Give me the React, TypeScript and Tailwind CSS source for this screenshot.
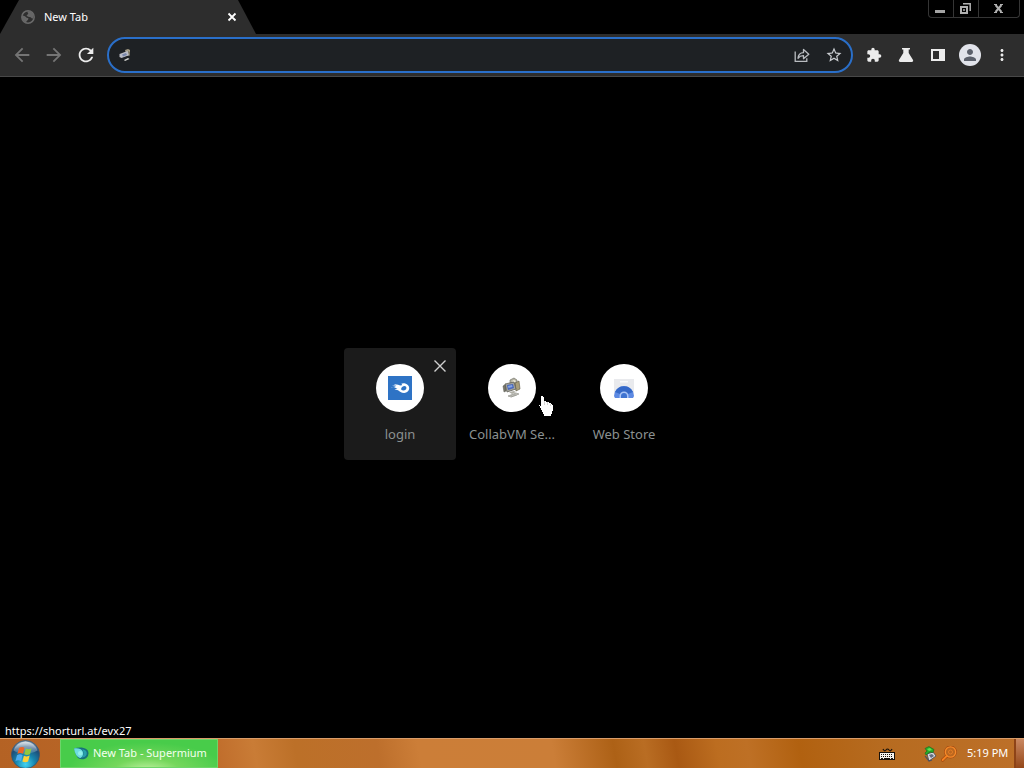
import type { ReactNode } from "react";
import {
  MdArrowBack,
  MdArrowForward,
  MdExtension,
  MdMoreVert,
  MdPerson,
  MdRefresh,
  MdStarBorder,
} from "react-icons/md";

function GlobeIcon() {
  return (
    <svg viewBox="0 0 16 16" className="size-4 shrink-0" aria-hidden="true">
      <circle cx="8" cy="8" r="6.2" fill="#2e2e2e" stroke="#6a6a6a" strokeWidth="1.5" />
      <path d="M2.2 6.2 5 7.2l1.7 1.6 1.8.4-.5 1.6-1.6 1.6-.3 1.5C3.500 13 2 10.800 1.800 8.500Z" fill="#666" />
      <path d="M7 2.200h3.200L13.600 5v3.600l-1.400 1.200-1.500-1.500-2.700-.5-1.500-1.200L8.300 4.700Z" fill="#666" />
    </svg>
  );
}

function MonitorsIcon() {
  return (
    <svg viewBox="0 0 24 24" className="size-6" aria-hidden="true">
      <path d="m10 4 4-2 3 2v5l-4 2-3-2Z" fill="#b5b3a3" stroke="#65645a" strokeWidth=".6" />
      <path d="m12 5 2-1 2 1-2 2Z" fill="#eeebd9" />
      <path d="m15 7 4-2 1 8-4 2Z" fill="#a99e79" stroke="#5b5542" strokeWidth=".6" />
      <path d="m3 10 3-2v7l-2 1Z" fill="#77766b" stroke="#55554d" strokeWidth=".5" />
      <path d="m5 8 9-2 2 7-9 3Z" fill="#a3a39b" stroke="#58584f" strokeWidth=".7" />
      <path d="m7 9 6-1 1 4-6 2Z" fill="#4968bd" />
      <path d="m8 10 4-1 .5 2-4 1Z" fill="#86a5e5" />
      <path d="m9 16 5-1 2 1-4 2Z" fill="#b1b0a7" />
      <path d="m8 20 8-3 3 1-8 3Z" fill="#d8d8d2" stroke="#85857c" strokeWidth=".6" />
      <path d="m10 20 6-2m-5 3 6-2" stroke="#8d8d85" strokeWidth=".5" />
    </svg>
  );
}

function TabMonitorsIcon() {
  return (
    <svg viewBox="0 0 16 16" className="size-4 shrink-0" aria-hidden="true">
      <path d="m8 3 3-1 2 1v5l-3 1Z" fill="#a39b83" />
      <path d="m2.500 7 8-3 2 4-8 3-2-1Z" fill="#b9bbc3" />
      <path d="m5 7.500 4-1.500 1 2-4 1.500Z" fill="#7886aa" />
      <path d="m7 13 4-2 1.500 1L8 14Z" fill="#d4d4cf" />
      <path d="m11 4 2 1v3l-1 1Z" fill="#77715e" />
    </svg>
  );
}

function ShareIcon() {
  return (
    <svg viewBox="0 0 16 16" className="size-4" fill="none" stroke="#b9bcc0" strokeWidth="1.300" aria-hidden="true">
      <path d="M1.200 4.500v9.800h11.600v-3" />
      <path d="M4 11.300c.3-3.700 2.100-5.600 5.500-5.700V2.500l5.300 4.700-5.300 4.500V8.700C7.100 8.600 5.400 9.400 4 11.300Z" strokeLinejoin="round" />
    </svg>
  );
}

function FlaskIcon() {
  return (
    <svg viewBox="0 0 16 16" className="size-4" fill="#ececec" aria-hidden="true">
      <path d="M4 1h8v1.500h-1.300V6l4.200 6.700c.7 1.100.1 2.300-1.200 2.300H2.300C1 15 .4 13.800 1.100 12.700L5.300 6V2.500H4Z" />
    </svg>
  );
}

function SidePanelIcon() {
  return (
    <svg viewBox="0 0 16 16" className="size-4" aria-hidden="true">
      <path fillRule="evenodd" fill="#ececec" d="M1 2h14v12H1Zm2 2v8h6V4Z" />
    </svg>
  );
}

function FlameIcon() {
  return (
    <svg viewBox="0 0 24 24" className="size-6" aria-hidden="true">
      <path fill="#2e73c5" d="M0 0h24v24H0z" />
      <path
        fillRule="evenodd"
        fill="#fff"
        d="M3 11.300c2 .3 3.500.2 5-.4-1.100-.6-2.700-1-4.200-.8 1.700-.8 3.100-.7 4.700-.2-.8-.8-1.500-1.300-2.600-1.700 3.400-.2 5.200 1.300 7.100 1.200.6 0 .9-.2 1-.6.100-.5-.3-.9-1-.9 1-.7 2.700-.9 4.200-.5 2.400.6 4 2.400 4 4.700 0 2.800-2.200 4.900-5 4.900-3.300 0-4.200-1.700-6.200-2.800-1.100-.6-2.300-.7-3.500-.1.900-1 1.700-1.500 3-1.600-2.500-.9-4.500-.4-6.500-1.200Zm10.200 1.100c-.4 1 .7 2 2.200 2 1.700 0 3-1.100 3-2.500 0-1.100-.8-1.800-1.900-1.800-1.600 0-2.800 1.100-3.300 2.300Z"
      />
    </svg>
  );
}

function WebStoreIcon() {
  return (
    <svg viewBox="0 0 24 24" className="size-6" aria-hidden="true">
      <path d="M2 3h20v17a2 2 0 0 1-2 2H4a2 2 0 0 1-2-2Z" fill="#e9eaed" />
      <path d="M8 5h8v1.500H8z" fill="#fafafa" />
      <path d="M2 20a10 10 0 0 1 20 0l-1 2H3Z" fill="#5d8ae3" />
      <path d="M3 16a10 10 0 0 1 18 0l-5 2-4-2-4 2Z" fill="#3569c8" />
      <path d="M7.500 22v-2a4.500 4.500 0 0 1 9 0v2Z" fill="#a9c4f6" />
      <path d="M9 22v-2a3 3 0 0 1 6 0v2Z" fill="#3e73d1" />
    </svg>
  );
}

function StartOrb() {
  return (
    <svg viewBox="0 0 30 30" className="size-[30px]" aria-hidden="true">
      <defs>
        <radialGradient id="orb" cx="50%" cy="85%" r="85%">
          <stop offset="0" stopColor="#43d3f2" />
          <stop offset=".4" stopColor="#1785ad" />
          <stop offset=".75" stopColor="#1e4b76" />
          <stop offset="1" stopColor="#8da3b5" />
        </radialGradient>
        <linearGradient id="gloss" x2="0" y2="1">
          <stop stopColor="#fff" stopOpacity=".75" />
          <stop offset="1" stopColor="#fff" stopOpacity=".1" />
        </linearGradient>
      </defs>
      <circle cx="15.500" cy="15.500" r="14" fill="url(#orb)" stroke="#36566f" strokeWidth=".8" />
      <path d="M3.500 11.500a12.500 12.500 0 0 1 24 0c-7 4-17 5-24 0Z" fill="url(#gloss)" />
      <path d="M9 9c2-1.300 4-1.300 5.500-.3L13 14.700c-2-.9-3.700-.8-5.600.3Z" fill="#ed6427" />
      <path d="M15.800 9.500c2 1 3.800.8 5.800-.2L20 15.200c-2 1-3.900 1-5.800 0Z" fill="#92c83e" />
      <path d="M7 16.200c2-1.100 3.800-1.100 5.600-.2L11 22c-1.900-1-3.800-.9-5.600.2Z" fill="#4eacef" />
      <path d="M13.900 16.700c2 1 3.900.9 5.800-.1l-1.600 5.900c-2 1-3.900 1-5.700.1Z" fill="#ffd035" />
    </svg>
  );
}

function SupermiumIcon() {
  return (
    <svg viewBox="0 0 16 16" className="size-4 shrink-0" aria-hidden="true">
      <path d="M1 2.500C5 1 10.500 1 13.500 3.200c2.700 2 2.300 5.800.5 8C12 13.500 8 14 5 12L3 9Z" fill="#176f7d" />
      <path d="M1 2.500c4-.7 7 .2 8.500 2.500 1.500 2.500.5 5.500-2 7C4 11.500 2 8 1 2.500Z" fill="#6edce0" />
      <path d="M9 3.500c4 0 5.500 2.500 4.500 5.300-.8 2.200-3 3-5.500 2.700 3-1.700 3.500-5.200 1-8Z" fill="#289fac" />
      <circle cx="7.200" cy="7.300" r="2.200" fill="#91f0e9" />
    </svg>
  );
}

function KeyboardIcon() {
  return (
    <svg viewBox="0 0 16 14" className="h-3.5 w-4" aria-hidden="true">
      <path d="M4 2q1.500 3 3 1t3 0 3-1" fill="none" stroke="#17110a" strokeWidth="1.200" />
      <g shapeRendering="crispEdges">
        <path d="M0 5h16v8H0z" fill="#17110a" />
        <path d="M1 6h14v6H1z" fill="#f6f3ed" />
        <path d="M2 7.500h12M2 9.500h12" stroke="#17110a" strokeDasharray="1 1" />
        <path d="M2 11.500h2m1 0h6m1 0h2" stroke="#17110a" />
      </g>
    </svg>
  );
}

function UsbIcon() {
  return (
    <svg viewBox="0 0 16 16" className="size-4" aria-hidden="true">
      <path d="m6 8 6-2 3 4-7 5Z" fill="#d5d8df" stroke="#454857" strokeWidth=".8" />
      <path d="m8 9 3-1 2 2-3 2Z" fill="#646d80" />
      <path d="m4 10 4 5 3-1" fill="none" stroke="#4a5060" strokeWidth="1.200" />
      <path d="M4 2.500 8 .5l5 3-1 3-3-.5-4 3-1-2 2-2Z" fill="#27aa2b" stroke="#116b1b" strokeWidth=".6" />
      <path d="m6 3 3-1 2 2-3 1Z" fill="#61df53" />
    </svg>
  );
}

function MagnifierIcon() {
  return (
    <svg viewBox="0 0 16 16" className="size-4" fill="none" aria-hidden="true">
      <g stroke="#a4480f" strokeLinecap="round">
        <circle cx="9.500" cy="6" r="5.200" strokeWidth="2.400" />
        <path d="M5.800 9.800 1.600 14" strokeWidth="3.200" />
      </g>
      <circle cx="9.500" cy="6" r="5.200" fill="#bb671f" stroke="#f58a2a" strokeWidth="1.300" />
      <circle cx="9.500" cy="6" r="2" stroke="#e57d25" />
      <path d="M5.800 9.800 1.600 14" stroke="#f5821f" strokeWidth="1.900" strokeLinecap="round" />
    </svg>
  );
}

function HandPointer() {
  return (
    <svg viewBox="0 0 16 21" className="absolute left-[82px] top-12 h-[21px] w-4" shapeRendering="crispEdges" aria-hidden="true">
      <path
        fill="#fff"
        d="M3 0h2v1h1v4h2v1h3v1h2v1h1v1h1v6h-1v3h-1v2H6v-2H5v-2H4v-2H3v-2H2v-2H1v-1H0V9h2v1h1Z"
      />
      <path d="M6.500 5v4m3-3v3m3-1v2" stroke="#aaa" strokeWidth=".5" />
    </svg>
  );
}

function IconButton({ label, children }: { label: string; children: ReactNode }) {
  return (
    <button type="button" aria-label={label} className="flex size-8 shrink-0 items-center justify-center text-[#ececec]">
      {children}
    </button>
  );
}

function Shortcut({ label, active, pointer, children }: { label: string; active?: boolean; pointer?: boolean; children: ReactNode }) {
  return (
    <li className={active ? "relative size-28 rounded bg-[#1b1b1b]" : "relative size-28 rounded"}>
      <a href="#" className="flex h-full flex-col items-center px-3 pt-4">
        <span className="flex size-12 items-center justify-center rounded-full bg-white">{children}</span>
        <span className="mt-3 whitespace-nowrap text-[13px] leading-5 text-[#8b9191]">{label}</span>
      </a>
      {active && (
        <button type="button" aria-label="Remove shortcut" className="absolute right-2 top-2 text-[#d0d0d0]">
          <svg viewBox="0 0 16 20" className="h-5 w-4" stroke="currentColor" strokeWidth="1.400" aria-hidden="true">
            <path d="m2.500 4.500 11 11m0-11-11 11" />
          </svg>
        </button>
      )}
      {pointer && <HandPointer />}
    </li>
  );
}

function TitleBar() {
  return (
    <header className="flex h-[34px] shrink-0 items-start justify-between">
      <div className="flex h-full w-64 items-center gap-2 bg-[#2d2d2d] pl-5 pr-4 [clip-path:polygon(19px_0,238px_0,100%_100%,0_100%)]">
        <GlobeIcon />
        <span className="flex-1 text-[11px] leading-4 text-white">New Tab</span>
        <button type="button" aria-label="Close tab" className="flex size-4 items-center justify-center text-white">
          <svg viewBox="0 0 10 10" className="size-2.5" stroke="currentColor" strokeWidth="1.800" aria-hidden="true">
            <path d="m1.500 1.500 7 7m0-7-7 7" />
          </svg>
        </button>
      </div>
      <div className="mr-1 flex h-[18px] rounded-b border border-t-0 border-[#353535] text-[#b0b0b0]">
        <button type="button" aria-label="Minimize" className="flex w-6 items-center justify-center">
          <svg viewBox="0 0 12 12" className="size-3" aria-hidden="true"><path d="M0 7h10v3H0z" fill="#a5a5a5" /></svg>
        </button>
        <button type="button" aria-label="Restore" className="flex w-[26px] items-center justify-center border-x border-[#353535]">
          <svg viewBox="0 0 12 12" className="size-3" fill="none" stroke="currentColor" aria-hidden="true">
            <path d="M1 4h6v6H1z" strokeWidth="2" />
            <path d="M3 .8h7.200V8" strokeWidth="1.500" />
            <path d="M3 7h2" strokeWidth="1.500" />
          </svg>
        </button>
        <button type="button" aria-label="Close" className="flex w-10 items-center justify-center">
          <svg viewBox="0 0 12 12" className="size-3" fill="none" stroke="currentColor" aria-hidden="true">
            <path d="m2.500 2 6 7m0-7-6 7" strokeWidth="2" />
            <path d="M1 1.500h3M7 1.500h3M1 9.500h3m3 0h3" />
          </svg>
        </button>
      </div>
    </header>
  );
}

function Toolbar() {
  return (
    <div className="flex h-[43px] shrink-0 items-center border-b border-[#484848] bg-[#2d2d2d] px-1.5">
      <IconButton label="Back"><MdArrowBack className="size-[22px] text-[#747474]" /></IconButton>
      <IconButton label="Forward"><MdArrowForward className="size-[22px] text-[#747474]" /></IconButton>
      <IconButton label="Reload"><MdRefresh className="size-[22px]" /></IconButton>
      <form className="mx-[5px] flex h-9 min-w-0 flex-1 items-center rounded-full border-2 border-[#2a6fc9] bg-[#1e2124] pl-2 pr-px">
        <TabMonitorsIcon />
        <input aria-label="Address and search bar" className="min-w-0 flex-1 bg-transparent px-2 text-sm text-white outline-none" />
        <IconButton label="Share"><ShareIcon /></IconButton>
        <IconButton label="Bookmark"><MdStarBorder className="size-[18px] text-[#c9ccd0]" /></IconButton>
      </form>
      <IconButton label="Extensions"><MdExtension className="size-4" /></IconButton>
      <IconButton label="Experiments"><FlaskIcon /></IconButton>
      <IconButton label="Side panel"><SidePanelIcon /></IconButton>
      <IconButton label="Profile">
        <span className="flex size-[22px] items-center justify-center rounded-full bg-[#e1e3ea]">
          <MdPerson className="size-[18px] text-[#5b606b]" />
        </span>
      </IconButton>
      <IconButton label="Menu"><MdMoreVert className="size-[18px]" /></IconButton>
    </div>
  );
}

function Taskbar() {
  return (
    <footer className="flex h-[30px] shrink-0 items-stretch border-t border-[#d99c69] bg-[linear-gradient(80deg,#b46224_0%,#bd6828_20%,#c97c36_25%,#bc7028_29%,#bd6f2c_37%,#cc7e38_41%,#cb7e38_54%,#ad6116_60%,#b96d23_63%,#a95913_66%,#bc6d20_70%,#be7025_73%,#b16110_78%,#b66b20_86%,#bd7029_100%)]">
      <button type="button" aria-label="Start" className="ml-2.5 w-[30px] self-center"><StartOrb /></button>
      <button
        type="button"
        className="ml-5 flex w-[158px] items-center gap-1 border border-[#6ed569] bg-[radial-gradient(ellipse_at_55%_115%,#c2f3a3_0%,#75d75c_28%,#48cc4a_65%)] pl-3 text-[11px] text-[#f4ffee]"
      >
        <SupermiumIcon />
        <span>New Tab - Supermium</span>
      </button>
      <div className="ml-auto flex items-center">
        <KeyboardIcon />
        <span className="ml-[26px] flex gap-1"><UsbIcon /><MagnifierIcon /></span>
        <time className="ml-2.5 w-[47px] text-[11px] text-white">5:19 PM</time>
        <button type="button" aria-label="Show desktop" className="h-full w-2.5 border-l-2 border-[#8d4317] bg-[linear-gradient(#ca8861,#944719)]" />
      </div>
    </footer>
  );
}

export default function App() {
  return (
    <div className="flex h-screen flex-col overflow-hidden bg-black font-['Noto_Sans','Open_Sans',sans-serif]">
      <TitleBar />
      <Toolbar />
      <main className="relative flex min-h-0 flex-1 items-center justify-center pb-2">
        <ul className="flex">
          <Shortcut label="login" active><FlameIcon /></Shortcut>
          <Shortcut label="CollabVM Se..." pointer><MonitorsIcon /></Shortcut>
          <Shortcut label="Web Store"><WebStoreIcon /></Shortcut>
        </ul>
        <div className="absolute bottom-0 left-0 pl-[5px] text-[11px] leading-[14px] text-white">https://shorturl.at/evx27</div>
      </main>
      <Taskbar />
    </div>
  );
}
